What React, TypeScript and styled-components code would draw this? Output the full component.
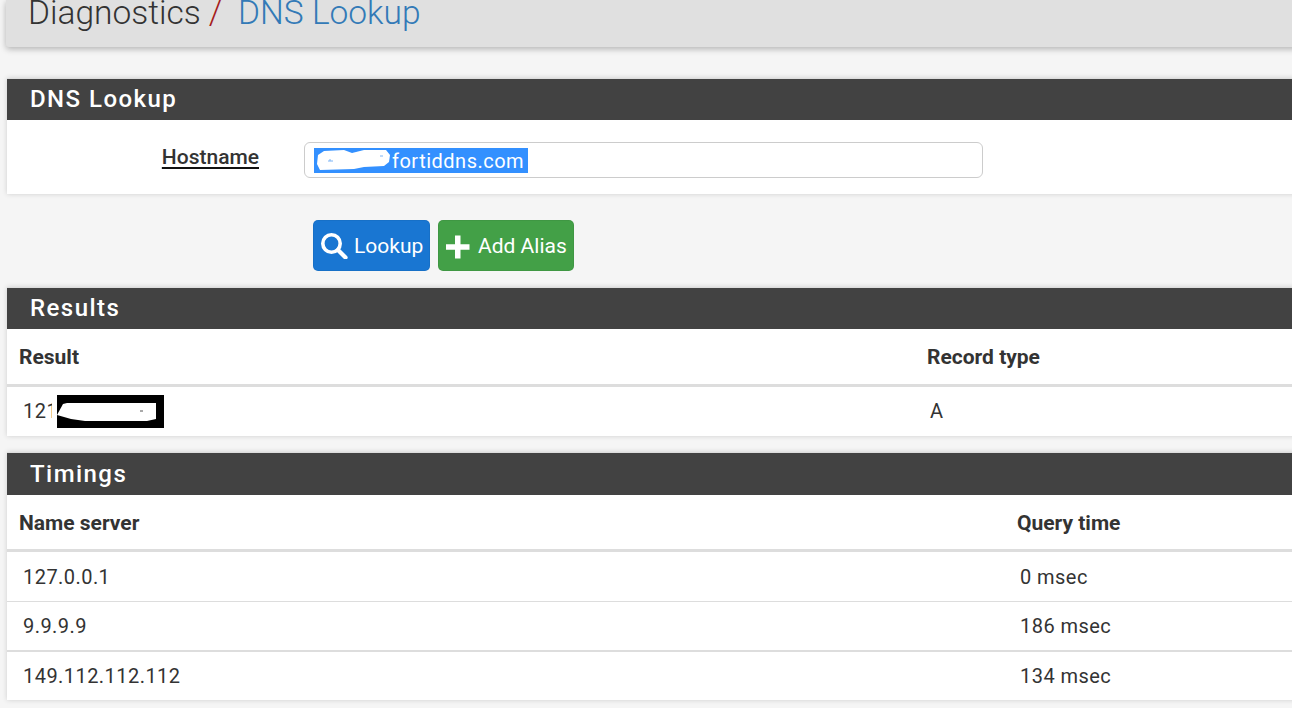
import React from "react";
import styled, { createGlobalStyle } from "styled-components";

const Global = createGlobalStyle`
  html, body { margin: 0; padding: 0; height: 100%; overflow: hidden; background: #fff; }
  #root { width: 1302px; height: 711px; overflow: hidden; }
`;

const Page = styled.div`
  width: 1292px;
  height: 708px;
  overflow: hidden;
  background: #f5f5f5;
  font-family: Roboto, "Liberation Sans", sans-serif;
  color: #333;
  display: flex;
  flex-direction: column;
  padding-left: 6px;
  box-sizing: border-box;
`;

const Crumbs = styled.header`
  flex: none;
  width: 1300px;
  height: 47px;
  background: #e0e0e0;
  box-shadow: 0 2px 6px rgba(0, 0, 0, 0.28);
  border-radius: 0 0 0 3px;
  padding-left: 22px;
  box-sizing: border-box;
  overflow: hidden;
  font-size: 33.5px;
  line-height: 26px;
  font-weight: 300;
  white-space: nowrap;
`;

const Crumb = styled.span`
  color: #333;
`;
const Sep = styled.span`
  color: #a51c1c;
  margin: 0 16px 0 8px;
`;
const Current = styled.span`
  color: #337ab7;
`;

const Panel = styled.section<{ $top: number }>`
  flex: none;
  margin: ${(p) => p.$top}px 0 0 1px;
  width: 1300px;
  background: #fff;
  box-shadow: 0 0 5px rgba(0, 0, 0, 0.16);
  border-top: 1px solid #ddd;
`;

const PanelTitle = styled.h2<{ $h?: number; $lh?: number }>`
  margin: 0;
  height: ${(p) => p.$h ?? 41}px;
  line-height: ${(p) => p.$lh ?? 40}px;
  padding-left: 23px;
  background: #424242;
  color: #fff;
  font-size: 24px;
  font-weight: 500;
  letter-spacing: 1.45px;
`;

const FormRow = styled.div`
  display: flex;
  align-items: flex-start;
  height: 74px;
  padding-top: 22px;
  box-sizing: border-box;
`;

const Label = styled.label`
  width: 252px;
  text-align: right;
  font-size: 21px;
  line-height: 24px;
  font-weight: 500;
  color: #333;
  text-decoration: underline;
  text-decoration-thickness: 2px;
  text-underline-offset: 3px;
  text-decoration-color: #111;
  margin-top: 3px;
`;

const FieldBox = styled.div`
  margin-left: 45px;
  width: 679px;
  height: 36px;
  border: 1px solid #ccc;
  border-radius: 6px;
  box-sizing: border-box;
  padding: 5px 0 0 9px;
`;

const Selected = styled.span`
  display: inline-flex;
  align-items: center;
  height: 25px;
  box-sizing: border-box;
  background: #3390ff;
  color: #fff;
  font-size: 20px;
  line-height: 25px;
  letter-spacing: 0.5px;
  padding: 2px 4px 0 0;
`;

const Blot = styled.svg<{ $left?: number; $lift?: number }>`
  display: block;
  flex: none;
  margin-left: ${(p) => p.$left ?? 0}px;
  margin-top: ${(p) => p.$lift ?? 0}px;
`;

const Actions = styled.div`
  display: flex;
  gap: 8px;
  flex: none;
  height: 93px;
  padding: 26px 0 0 307px;
  box-sizing: border-box;
`;

const Btn = styled.button<{ $bg: string; $w: number }>`
  display: flex;
  align-items: center;
  width: ${(p) => p.$w}px;
  height: 51px;
  padding: 0 0 0 7px;
  border: 1px solid rgba(0, 0, 0, 0.05);
  border-radius: 5px;
  background: ${(p) => p.$bg};
  color: #fff;
  font: 400 21px Roboto, "Liberation Sans", sans-serif;
  box-sizing: border-box;
`;

const BtnIcon = styled.svg`
  flex: none;
  margin-right: 6px;
`;

const Table = styled.div`
  display: flex;
  flex-direction: column;
`;

const Row = styled.div<{ $cols: string; $h: number; $line: number; $pad?: number; $down?: number; $up?: number }>`
  display: grid;
  grid-template-columns: ${(p) => p.$cols};
  height: ${(p) => p.$h}px;
  align-items: center;
  box-sizing: border-box;
  border-bottom: ${(p) => p.$line}px solid #ddd;
  padding: ${(p) => p.$down ?? 0}px 0 ${(p) => p.$up ?? 0}px ${(p) => p.$pad ?? 16}px;
`;

const Th = styled.div`
  font-size: 21px;
  font-weight: 700;
  color: #333;
`;

const Td = styled.div`
  font-size: 20px;
  font-weight: 400;
  color: #333;
  letter-spacing: 0.45px;
`;

const Redacted = styled.div`
  display: flex;
  align-items: center;
`;

export default function App() {
  return (
    <Page>
      <Global />
      <Crumbs>
        <Crumb>Diagnostics</Crumb>
        <Sep>/</Sep>
        <Current>DNS Lookup</Current>
      </Crumbs>

      <Panel $top={31}>
        <PanelTitle>DNS Lookup</PanelTitle>
        <FormRow>
          <Label>Hostname</Label>
          <FieldBox>
            <Selected>
              <Blot width="78" height="25" viewBox="0 0 78 25" $lift={-2}>
                <rect width="78" height="25" fill="#3390ff" />
                <path d="M4 7 L10 3 L30 2 L38 5 L50 2 L72 2 L76 7 L75 14 L70 18 L50 19 L40 21 L6 22 L3 16 Z" fill="#fff" />
                <path d="M14 13h5M16 11v2M66 8h3" stroke="#7db4f5" strokeWidth="1" />
              </Blot>
              fortiddns.com
            </Selected>
          </FieldBox>
        </FormRow>
      </Panel>

      <Actions>
        <Btn $bg="#1976d2" $w={117}>
          <BtnIcon width="27" height="26" viewBox="0 0 27 26" fill="none" stroke="#fff">
            <circle cx="10.5" cy="10.5" r="8.7" strokeWidth="3.6" />
            <path d="M17 17 L24.5 24.5" strokeWidth="4.2" strokeLinecap="round" />
          </BtnIcon>
          Lookup
        </Btn>
        <Btn $bg="#43a047" $w={136}>
          <BtnIcon width="26" height="26" viewBox="0 0 26 26" fill="none" stroke="#fff">
            <path d="M11.75 2.5 V25.5 M0 14 H23.5" strokeWidth="5.5" />
          </BtnIcon>
          Add Alias
        </Btn>
      </Actions>

      <Panel $top={0}>
        <PanelTitle>Results</PanelTitle>
        <Table>
          <Row $cols="908px 1fr" $h={58} $line={3} $pad={12}>
            <Th>Result</Th>
            <Th>Record type</Th>
          </Row>
          <Row $cols="907px 1fr" $h={49} $line={0} $up={1}>
            <Redacted>
              <Td>121</Td>
              <Blot width="112" height="33" viewBox="-5 0 112 33" $left={-6}>
                <rect x="-5" width="5" height="33" fill="#fff" />
                <rect width="107" height="33" fill="#000" />
                <path d="M0 20 L6 9 L10 8 L99 8 L99 24 L90 26 L28 26 L14 24 Z" fill="#fff" />
                <path d="M83 16h3" stroke="#555" strokeWidth="1" />
              </Blot>
            </Redacted>
            <Td>A</Td>
          </Row>
        </Table>
      </Panel>

      <Panel $top={16}>
        <PanelTitle $h={42} $lh={42}>Timings</PanelTitle>
        <Table>
          <Row $cols="998px 1fr" $h={57} $line={3} $pad={12} $down={2}>
            <Th>Name server</Th>
            <Th>Query time</Th>
          </Row>
          <Row $cols="997px 1fr" $h={50} $line={1}>
            <Td>127.0.0.1</Td>
            <Td>0 msec</Td>
          </Row>
          <Row $cols="997px 1fr" $h={50} $line={2}>
            <Td>9.9.9.9</Td>
            <Td>186 msec</Td>
          </Row>
          <Row $cols="997px 1fr" $h={48} $line={0}>
            <Td>149.112.112.112</Td>
            <Td>134 msec</Td>
          </Row>
        </Table>
      </Panel>
    </Page>
  );
}
